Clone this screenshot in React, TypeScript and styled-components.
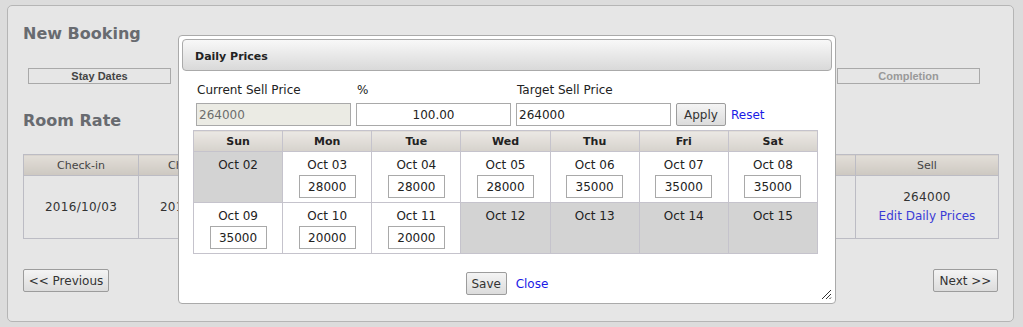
import React from "react";
import styled, { createGlobalStyle } from "styled-components";

const GlobalStyle = createGlobalStyle`
  html, body {
    margin: 0;
    padding: 0;
    background: #dcdcdc;
    font-family: "DejaVu Sans", Verdana, sans-serif;
    font-size: 12px;
    color: #222;
  }
  * { box-sizing: border-box; }
`;

const Page = styled.div`
  position: relative;
  width: 1023px;
  height: 327px;
  padding: 5px 0 0 7px;
`;

const Panel = styled.div`
  width: 1007px;
  height: 317px;
  background: #e6e6e6;
  border: 1px solid #b5b5b5;
  border-radius: 5px;
  padding: 18px 15px 0 15px;
`;

const Heading = styled.h2<{ mt?: number }>`
  margin: ${(p) => p.mt || 0}px 0 0 0;
  font-size: 16px;
  line-height: 20px;
  font-weight: bold;
  color: #686b70;
`;

const Steps = styled.div`
  display: flex;
  justify-content: space-between;
  width: 952px;
  margin: 24px 0 0 5px;
`;

const Step = styled.div<{ active?: boolean }>`
  width: 143px;
  height: 16px;
  border: 1px solid #a9a9a9;
  font-family: "Liberation Sans", Arial, sans-serif;
  font-size: 11px;
  font-weight: bold;
  line-height: 14px;
  text-align: center;
  color: ${(p) => (p.active ? "#444" : "#999")};
`;

const RateTable = styled.table`
  width: 975px;
  margin-top: 23px;
  border-collapse: collapse;
  table-layout: fixed;
  th, td {
    border: 1px solid #bcbcc4;
    text-align: center;
  }
  th {
    height: 21px;
    padding: 0;
    font-size: 11px;
    font-weight: normal;
    color: #444;
    background: linear-gradient(#e2ded8, #cdc8c1);
  }
  td {
    height: 63px;
    line-height: 19px;
    letter-spacing: 0.3px;
    color: #333;
  }
`;

const Link = styled.a<{ tone?: string }>`
  color: ${(p) => p.tone || "#1a1ae6"};
  text-decoration: none;
  letter-spacing: 0;
  cursor: pointer;
`;

const NavRow = styled.div`
  display: flex;
  justify-content: space-between;
  margin-top: 30px;
`;

const Button = styled.button<{ w: number }>`
  width: ${(p) => p.w}px;
  height: 23px;
  padding: 0;
  border: 1px solid #9c9c9c;
  border-radius: 2px;
  background: linear-gradient(#f4f4f4, #dcdcdc);
  font-family: "DejaVu Sans", Verdana, sans-serif;
  font-size: 12px;
  color: #333;
`;

const Dialog = styled.div`
  position: absolute;
  left: 178px;
  top: 35px;
  width: 658px;
  height: 269px;
  background: #fff;
  border: 1px solid #aaa;
  border-radius: 4px;
  padding: 3px;
`;

const TitleBar = styled.div`
  height: 32px;
  border: 1px solid #aaa;
  border-radius: 4px;
  background: linear-gradient(#f8f8f8, #d9d9d9);
  padding: 2px 0 0 12px;
  font-size: 11px;
  font-weight: bold;
  line-height: 30px;
  color: #222;
`;

const Content = styled.div`
  padding: 11px 11px 0 11px;
`;

const FormGrid = styled.div`
  display: grid;
  grid-template-columns: 155px 155px 155px auto 1fr;
  column-gap: 5px;
  row-gap: 5px;
  align-items: center;
  margin-left: 3px;
`;

const Label = styled.div`
  padding-left: 1px;
  line-height: 16px;
  color: #222;
`;

const Input = styled.input<{ w?: number; align?: string }>`
  width: ${(p) => (p.w ? `${p.w}px` : "100%")};
  height: 23px;
  padding: 0 2px;
  border: 1px solid #a9a9a9;
  background: #fff;
  font-family: "DejaVu Sans", Verdana, sans-serif;
  font-size: 12px;
  color: #222;
  text-align: ${(p) => p.align || "left"};
  &:disabled {
    background: #ebebe4;
    color: #6d6d6d;
  }
`;

const Calendar = styled.table`
  width: 625px;
  margin-top: 4px;
  border-collapse: collapse;
  table-layout: fixed;
  th, td {
    border: 1px solid #c5c3cc;
    text-align: center;
  }
  th {
    height: 21px;
    padding: 0;
    font-size: 11px;
    font-weight: bold;
    color: #222;
    background: linear-gradient(#ebe8e4, #d6d2cc);
  }
`;

const DayCell = styled.td<{ off?: boolean }>`
  height: 51px;
  padding: 5px 0 0 0;
  vertical-align: top;
  background: ${(p) => (p.off ? "#d3d3d3" : "#fff")};
`;

const DayLabel = styled.div`
  line-height: 17px;
  color: #222;
`;

const PriceInput = styled(Input)`
  margin-top: 1px;
  text-align: center;
`;

const Footer = styled.div`
  display: flex;
  justify-content: center;
  align-items: center;
  gap: 9px;
  margin-top: 18px;
`;

const Grip = styled.svg`
  position: absolute;
  right: 3px;
  bottom: 3px;
`;

const rows: { day: string; price?: string }[][] = [
  [
    { day: "Oct 02" },
    { day: "Oct 03", price: "28000" },
    { day: "Oct 04", price: "28000" },
    { day: "Oct 05", price: "28000" },
    { day: "Oct 06", price: "35000" },
    { day: "Oct 07", price: "35000" },
    { day: "Oct 08", price: "35000" },
  ],
  [
    { day: "Oct 09", price: "35000" },
    { day: "Oct 10", price: "20000" },
    { day: "Oct 11", price: "20000" },
    { day: "Oct 12" },
    { day: "Oct 13" },
    { day: "Oct 14" },
    { day: "Oct 15" },
  ],
];

const weekDays = ["Sun", "Mon", "Tue", "Wed", "Thu", "Fri", "Sat"];

export default function App() {
  return (
    <Page>
      <GlobalStyle />
      <Panel>
        <Heading>New Booking</Heading>
        {/* middle steps sit under the dialog */}
        <Steps>
          <Step active>Stay Dates</Step>
          <Step />
          <Step />
          <Step />
          <Step>Completion</Step>
        </Steps>
        <Heading mt={27}>Room Rate</Heading>
        <RateTable>
          <colgroup>
            <col style={{ width: 115 }} />
            <col style={{ width: 115 }} />
            <col style={{ width: 220 }} />
            <col style={{ width: 120 }} />
            <col style={{ width: 262 }} />
            <col style={{ width: 143 }} />
          </colgroup>
          <thead>
            <tr>
              <th>Check-in</th>
              <th>Check-out</th>
              <th />
              <th />
              <th />
              <th>Sell</th>
            </tr>
          </thead>
          <tbody>
            <tr>
              <td>2016/10/03</td>
              <td>2016/10/12</td>
              <td />
              <td />
              <td />
              <td>
                264000
                <br />
                <Link tone="#3b3bd6">Edit Daily Prices</Link>
              </td>
            </tr>
          </tbody>
        </RateTable>
        <NavRow>
          <Button w={86}>&lt;&lt; Previous</Button>
          <Button w={65}>Next &gt;&gt;</Button>
        </NavRow>
      </Panel>

      <Dialog>
        <TitleBar>Daily Prices</TitleBar>
        <Content>
          <FormGrid>
            <Label>Current Sell Price</Label>
            <Label>%</Label>
            <Label>Target Sell Price</Label>
            <span />
            <span />
            <Input disabled defaultValue="264000" />
            <Input align="center" defaultValue="100.00" />
            <Input defaultValue="264000" />
            <Button w={50}>Apply</Button>
            <Link>Reset</Link>
          </FormGrid>
          <Calendar>
            <thead>
              <tr>
                {weekDays.map((d) => (
                  <th key={d}>{d}</th>
                ))}
              </tr>
            </thead>
            <tbody>
              {rows.map((row, i) => (
                <tr key={i}>
                  {row.map((c) => (
                    <DayCell key={c.day} off={!c.price}>
                      <DayLabel>{c.day}</DayLabel>
                      {c.price && <PriceInput w={57} defaultValue={c.price} />}
                    </DayCell>
                  ))}
                </tr>
              ))}
            </tbody>
          </Calendar>
          <Footer>
            <Button w={41}>Save</Button>
            <Link>Close</Link>
          </Footer>
        </Content>
        <Grip width="12" height="12" viewBox="0 0 12 12">
          <path d="M11 2 L2 11 M11 6 L6 11 M11 9.5 L9.5 11" stroke="#333" strokeWidth="1" fill="none" />
        </Grip>
      </Dialog>
    </Page>
  );
}
